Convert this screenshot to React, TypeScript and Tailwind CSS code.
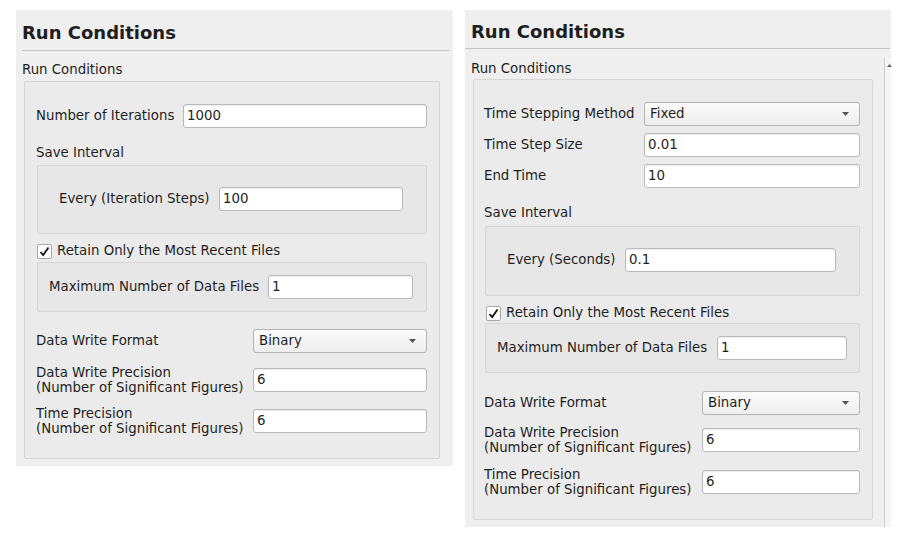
import React from 'react';

// Qt-style "Run Conditions" property panels, two variants side by side

const TextInput: React.FC<{ value: string }> = ({ value }) => (
    <div className="flex-1 h-[24px] flex items-center bg-white border border-[#b9b9b9] rounded-[3px] pl-[3px] shadow-[inset_0_1px_1px_rgba(0,0,0,0.08)]">
        {value}
    </div>
);

const Combo: React.FC<{ value: string }> = ({ value }) => (
    <div className="flex-1 h-[24px] flex items-center justify-between bg-gradient-to-b from-[#fbfbfb] to-[#eeeeee] border border-[#b5b5b5] rounded-[3px] pl-[5px] pr-[10px]">
        <span>{value}</span>
        <svg width="7" height="4" viewBox="0 0 7 4">
            <path d="M0 0 L7 0 L3.5 4 Z" fill="#555" />
        </svg>
    </div>
);

const CheckBox: React.FC = () => (
    <div className="w-[15px] h-[15px] bg-white border border-[#a8a8a8] rounded-[2px] flex items-center justify-center">
        <svg width="11" height="11" viewBox="0 0 11 11">
            <path d="M1.5 6 L4.2 9 L9.5 1.5" fill="none" stroke="#111" strokeWidth="1.8" />
        </svg>
    </div>
);

const TwoLineLabel: React.FC<{ first: string }> = ({ first }) => (
    <div className="leading-[15px]">
        <div>{first}</div>
        <div>(Number of Significant Figures)</div>
    </div>
);

const LeftPanel: React.FC = () => (
    <div className="w-[437px] h-[456px] bg-[#efefef] pt-[12px] shrink-0">
        <div className="pl-[6px] text-[18px] leading-[22px] font-bold">Run Conditions</div>
        <div className="mt-[6px] ml-[6px] mr-[3px] h-px bg-[#c4c4c4]" />
        <div className="mt-[11px] pl-[6px] leading-[16px]">Run Conditions</div>
        <div className="mt-[3px] ml-[8px] mr-[13px] border border-[#d6d6d6] rounded-[2px] bg-[#ebebeb] pt-[22px] pb-[22px] pl-[11px] pr-[12px]">
            <div className="flex items-center">
                <div className="w-[147px]">Number of Iterations</div>
                <TextInput value="1000" />
            </div>
            <div className="mt-[17px] leading-[16px]">Save Interval</div>
            <div className="mt-[4px] ml-[1px] border border-[#d6d6d6] rounded-[2px] bg-[#e7e7e7] pt-[21px] pb-[22px] pl-[21px] pr-[23px]">
                <div className="flex items-center">
                    <div className="w-[160px]">Every (Iteration Steps)</div>
                    <TextInput value="100" />
                </div>
            </div>
            <div className="mt-[9px] ml-[1px] h-[16px] flex items-center gap-[5px]">
                <CheckBox />
                <span>Retain Only the Most Recent Files</span>
            </div>
            <div className="mt-[3px] ml-[1px] border border-[#d6d6d6] rounded-[2px] bg-[#e7e7e7] pt-[12px] pb-[12px] pl-[11px] pr-[13px]">
                <div className="flex items-center">
                    <div className="w-[219px]">Maximum Number of Data Files</div>
                    <TextInput value="1" />
                </div>
            </div>
            <div className="mt-[17px] flex items-center">
                <div className="w-[217px]">Data Write Format</div>
                <Combo value="Binary" />
            </div>
            <div className="mt-[12px] h-[30px] flex items-center">
                <div className="w-[217px]"><TwoLineLabel first="Data Write Precision" /></div>
                <TextInput value="6" />
            </div>
            <div className="mt-[11px] h-[30px] flex items-center">
                <div className="w-[217px]"><TwoLineLabel first="Time Precision" /></div>
                <TextInput value="6" />
            </div>
        </div>
    </div>
);

const RightPanel: React.FC = () => (
    <div className="w-[426px] h-[517px] bg-[#efefef] pt-[11px] shrink-0 flex flex-col">
        <div className="pl-[6px] text-[18px] leading-[22px] font-bold">Run Conditions</div>
        <div className="mt-[5px] mr-[1px] h-px bg-[#c4c4c4]" />
        <div className="mt-[9px] flex flex-1">
            <div className="flex-1 pt-[3px]">
                <div className="pl-[6px] leading-[16px]">Run Conditions</div>
                <div className="mt-[2px] ml-[8px] mr-[11px] border border-[#d6d6d6] rounded-[2px] bg-[#ebebeb] pt-[22px] pb-[22px] pl-[10px] pr-[12px]">
                    <div className="flex items-center">
                        <div className="w-[160px]">Time Stepping Method</div>
                        <Combo value="Fixed" />
                    </div>
                    <div className="mt-[7px] flex items-center">
                        <div className="w-[160px]">Time Step Size</div>
                        <TextInput value="0.01" />
                    </div>
                    <div className="mt-[7px] flex items-center">
                        <div className="w-[160px]">End Time</div>
                        <TextInput value="10" />
                    </div>
                    <div className="mt-[17px] leading-[16px]">Save Interval</div>
                    <div className="mt-[5px] ml-[1px] border border-[#d6d6d6] rounded-[2px] bg-[#e7e7e7] pt-[21px] pb-[23px] pl-[21px] pr-[23px]">
                        <div className="flex items-center">
                            <div className="w-[118px]">Every (Seconds)</div>
                            <TextInput value="0.1" />
                        </div>
                    </div>
                    <div className="mt-[9px] ml-[2px] h-[16px] flex items-center gap-[5px]">
                        <CheckBox />
                        <span>Retain Only the Most Recent Files</span>
                    </div>
                    <div className="mt-[2px] ml-[1px] border border-[#d6d6d6] rounded-[2px] bg-[#e7e7e7] pt-[12px] pb-[12px] pl-[11px] pr-[12px]">
                        <div className="flex items-center">
                            <div className="w-[220px]">Maximum Number of Data Files</div>
                            <TextInput value="1" />
                        </div>
                    </div>
                    <div className="mt-[18px] flex items-center">
                        <div className="w-[218px]">Data Write Format</div>
                        <Combo value="Binary" />
                    </div>
                    <div className="mt-[10px] h-[30px] flex items-center">
                        <div className="w-[218px]"><TwoLineLabel first="Data Write Precision" /></div>
                        <TextInput value="6" />
                    </div>
                    <div className="mt-[12px] h-[30px] flex items-center">
                        <div className="w-[218px]"><TwoLineLabel first="Time Precision" /></div>
                        <TextInput value="6" />
                    </div>
                </div>
            </div>
            {/* clipped vertical scroll bar */}
            <div className="w-[7px] border-l border-[#cdcdcd] bg-[#f5f5f5] pt-[6px] pl-[2px]">
                <svg width="5" height="3" viewBox="0 0 5 3">
                    <path d="M0 3 L5 3 L2.5 0 Z" fill="#666" />
                </svg>
            </div>
        </div>
    </div>
);

export default function App() {
    return (
        <div className="w-[902px] h-[539px] bg-white flex gap-[12px] pl-[16px] pt-[10px] font-['DejaVu_Sans',sans-serif] text-[13.33px] text-[#1e1e1e] overflow-hidden">
            <LeftPanel />
            <RightPanel />
        </div>
    );
}
